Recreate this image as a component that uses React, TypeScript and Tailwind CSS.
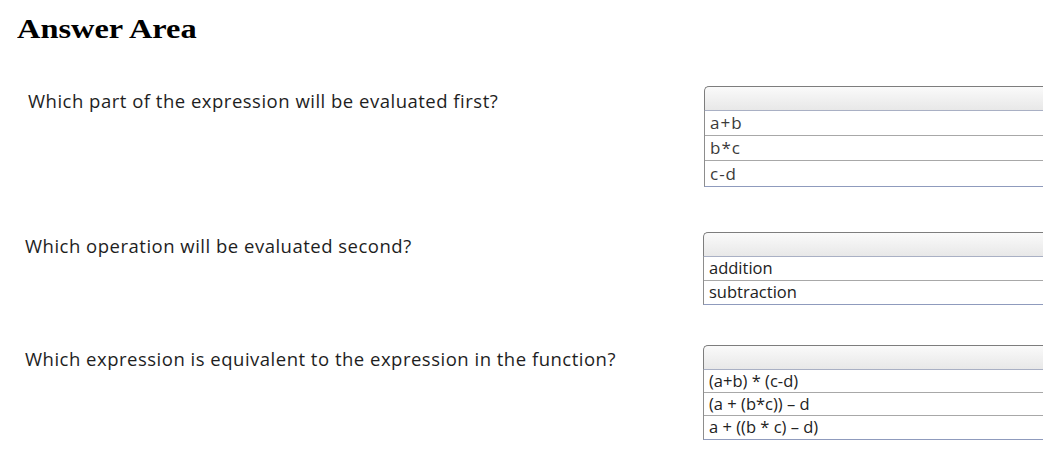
const sans = { fontFamily: '"Open Sans", "Noto Sans", sans-serif' }

type Props = {
  options: string[]
  rowH: string
  text: string
}

function Dropdown({ options, rowH, text }: Props) {
  return (
    <div className="w-[360px] shrink-0">
      <div className="h-[25px] rounded-tl-[5px] border border-r-0 border-[#7d7d7d] border-b-[#a9b0c4] bg-gradient-to-b from-[#fafafa] to-[#e8e8e8]" />
      <div className="border-l border-b border-l-[#8d8d8d] border-b-[#8f9bbd]">
        {options.map((o, i) => (
          <div
            key={o}
            className={`${rowH} flex items-center pl-[5px] ${text} ${i < options.length - 1 ? 'border-b border-[#a8a8a8]' : ''}`}
            style={sans}
          >
            {o}
          </div>
        ))}
      </div>
    </div>
  )
}

export default function App() {
  return (
    <div className="w-[1043px] h-[462px] overflow-hidden bg-white relative">
      <div className="pl-[17px] pt-[12px]">
        <h1
          className="inline-block origin-left scale-x-[1.2] text-[27px] font-bold leading-[34px] text-black"
          style={{ fontFamily: '"Liberation Serif", serif' }}
        >
          Answer Area
        </h1>
      </div>

      <div className="mt-[40px] flex items-start">
        <p className="w-[704px] shrink-0 pl-[28px] pt-[3px] text-[18.5px] leading-[24px] tracking-[0.5px] text-[#1e1e1e]" style={sans}>
          Which part of the expression will be evaluated first?
        </p>
        <Dropdown options={['a+b', 'b*c', 'c-d']} rowH="h-[25px]" text="text-[17px] tracking-[1px] text-[#3a3a3a]" />
      </div>

      <div className="mt-[45px] flex items-start">
        <p className="w-[703px] shrink-0 pl-[25px] pt-[2px] text-[18.5px] leading-[24px] tracking-[0.5px] text-[#1e1e1e]" style={sans}>
          Which operation will be evaluated second?
        </p>
        <Dropdown options={['addition', 'subtraction']} rowH="h-[23.5px]" text="text-[16.5px] text-[#222]" />
      </div>

      <div className="mt-[40px] flex items-start">
        <p className="w-[703px] shrink-0 pl-[25px] pt-[2px] text-[18.5px] leading-[24px] tracking-[0.5px] text-[#1e1e1e]" style={sans}>
          Which expression is equivalent to the expression in the function?
        </p>
        <Dropdown
          options={['(a+b) * (c-d)', '(a + (b*c)) \u2013 d', 'a + ((b * c) \u2013 d)']}
          rowH="h-[23px]"
          text="text-[16.5px] text-[#222]"
        />
      </div>
    </div>
  )
}
